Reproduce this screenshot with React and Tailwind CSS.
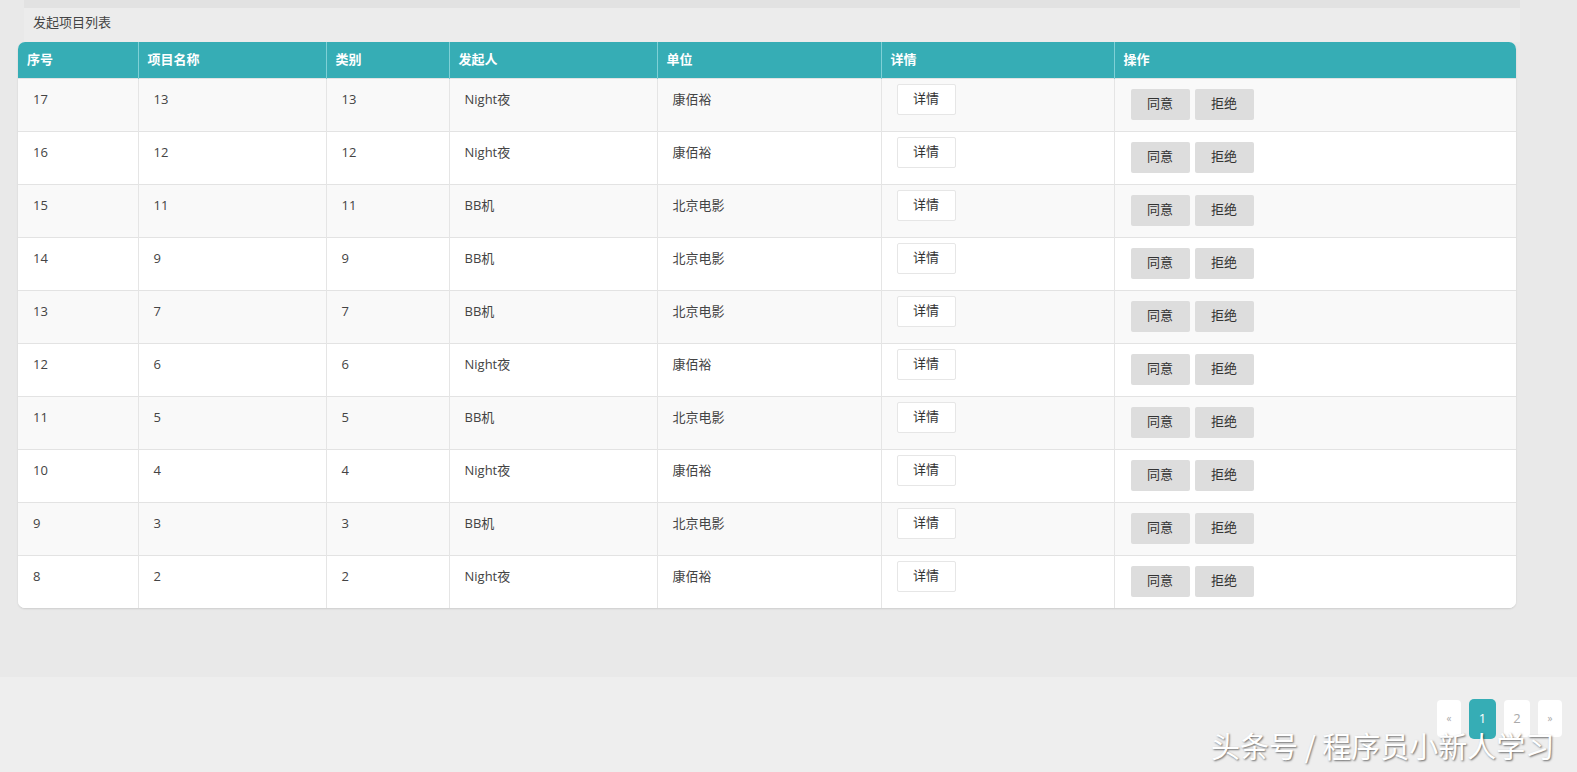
import React from 'react';

const rows = [
  { id: 17, name: '13', type: '13', user: 'Night夜', unit: '康佰裕' },
  { id: 16, name: '12', type: '12', user: 'Night夜', unit: '康佰裕' },
  { id: 15, name: '11', type: '11', user: 'BB机', unit: '北京电影' },
  { id: 14, name: '9', type: '9', user: 'BB机', unit: '北京电影' },
  { id: 13, name: '7', type: '7', user: 'BB机', unit: '北京电影' },
  { id: 12, name: '6', type: '6', user: 'Night夜', unit: '康佰裕' },
  { id: 11, name: '5', type: '5', user: 'BB机', unit: '北京电影' },
  { id: 10, name: '4', type: '4', user: 'Night夜', unit: '康佰裕' },
  { id: 9, name: '3', type: '3', user: 'BB机', unit: '北京电影' },
  { id: 8, name: '2', type: '2', user: 'Night夜', unit: '康佰裕' },
];

const cols = [
  { label: '序号', w: 'w-[120px]' },
  { label: '项目名称', w: 'w-[188px]' },
  { label: '类别', w: 'w-[123px]' },
  { label: '发起人', w: 'w-[208px]' },
  { label: '单位', w: 'w-[224px]' },
  { label: '详情', w: 'w-[233px]' },
  { label: '操作', w: 'w-[402px]' },
];

const font = { fontFamily: '"Open Sans", "Noto Sans CJK SC", sans-serif' };

export default function App() {
  return (
    <div className="w-[1577px] h-[772px] bg-[#eeeeee] text-[13px] text-[#444]" style={font}>
      {/* Main area */}
      <div className="h-[677px] bg-[#e9e9e9]">
        <div className="ml-[24px] w-[1496px] h-[8px] bg-[#e2e2e2]" />
        <div className="ml-[24px] w-[1496px] h-[34px] bg-[#ececec] pl-[9px] pt-[5px] text-[13px] text-[#444]">
          发起项目列表
        </div>

        {/* Table panel */}
        <div className="ml-[18px] w-[1498px] rounded-[7px] overflow-hidden bg-white shadow-[0_1px_2px_rgba(0,0,0,0.12)]">
          <table className="w-full table-fixed border-collapse">
            <thead>
              <tr className="h-[36px] bg-[#36adb5] text-white">
                {cols.map((c, i) => (
                  <th
                    key={c.label}
                    className={`${c.w} text-left font-bold text-[13px] pl-[9px] ${i > 0 ? 'border-l border-[#7fd0d6]' : ''}`}
                  >
                    {c.label}
                  </th>
                ))}
              </tr>
            </thead>
            <tbody>
              {rows.map((r, i) => (
                <tr key={r.id} className={`h-[53px] align-top border-t border-[#e3e3e3] ${i % 2 === 0 ? 'bg-[#f9f9f9]' : 'bg-white'}`}>
                  <td className="pl-[15px] pt-[11px]">{r.id}</td>
                  <td className="border-l border-[#e5e5e5] pl-[15px] pt-[11px]">{r.name}</td>
                  <td className="border-l border-[#e5e5e5] pl-[15px] pt-[11px]">{r.type}</td>
                  <td className="border-l border-[#e5e5e5] pl-[15px] pt-[11px]">{r.user}</td>
                  <td className="border-l border-[#e5e5e5] pl-[15px] pt-[11px]">{r.unit}</td>
                  <td className="border-l border-[#e5e5e5] pl-[15px] pt-[5px]">
                    <button className="w-[59px] h-[31px] bg-white border border-[#e6e6e6] rounded-[2px] text-[13px] text-[#333]">
                      详情
                    </button>
                  </td>
                  <td className="border-l border-[#e5e5e5] pl-[16px] pt-[10px]">
                    <div className="flex gap-[5px]">
                      <button className="w-[59px] h-[31px] bg-[#dddddd] rounded-[2px] text-[13px] text-[#333]">同意</button>
                      <button className="w-[59px] h-[31px] bg-[#dddddd] rounded-[2px] text-[13px] text-[#333]">拒绝</button>
                    </div>
                  </td>
                </tr>
              ))}
            </tbody>
          </table>
        </div>
      </div>

      {/* Footer / pagination */}
      <div className="relative h-[95px]">
        <div className="flex justify-end items-start gap-[8px] pr-[15px] pt-[22px]">
          <div className="w-[24px] h-[37px] mt-[1px] bg-white rounded-[4px] flex items-center justify-center text-[10px] text-[#aaa]">«</div>
          <div className="w-[27px] h-[40px] bg-[#36adb5] rounded-[5px] flex items-center justify-center text-[13px] text-white">1</div>
          <div className="w-[26px] h-[37px] mt-[1px] bg-white rounded-[4px] flex items-center justify-center text-[13px] text-[#aaa]">2</div>
          <div className="w-[24px] h-[37px] mt-[1px] bg-white rounded-[4px] flex items-center justify-center text-[10px] text-[#aaa]">»</div>
        </div>
        <div
          className="absolute left-[1211px] top-[50px] text-[29px] leading-[36px] text-white whitespace-nowrap [text-shadow:1px_1px_2px_rgba(0,0,0,0.55)]"
          style={{ fontFamily: '"Noto Sans CJK SC", sans-serif' }}
        >
          头条号 / 程序员小新人学习
        </div>
      </div>
    </div>
  );
}
